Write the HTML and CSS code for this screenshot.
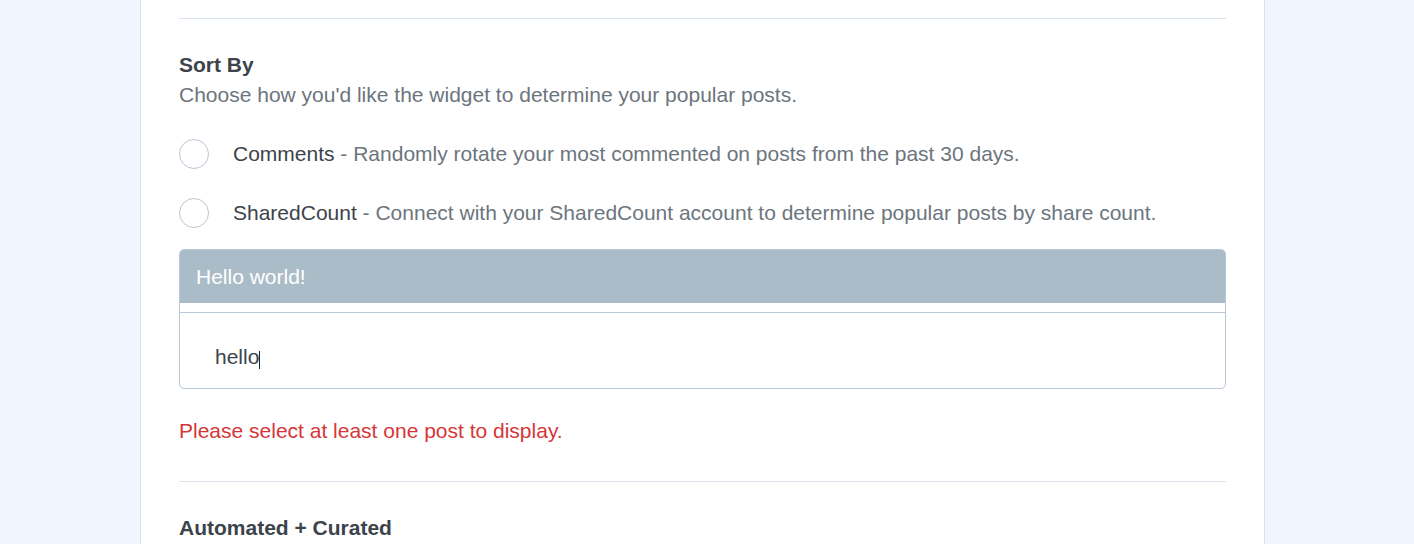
FILE: index.html
```html
<!DOCTYPE html>
<html>
<head>
<meta charset="utf-8">
<link rel="stylesheet" href="styles.css">
</head>
<body>
<div class="panel">
  <hr class="sep sep-top">
  <section class="field">
    <h3 class="field-title">Sort By</h3>
    <p class="field-desc">Choose how you'd like the widget to determine your popular posts.</p>
    <label class="radio-row">
      <span class="radio"></span>
      <span class="radio-text"><span class="radio-name">Comments</span> - Randomly rotate your most commented on posts from the past 30 days.</span>
    </label>
    <label class="radio-row">
      <span class="radio"></span>
      <span class="radio-text"><span class="radio-name">SharedCount</span> - Connect with your SharedCount account to determine popular posts by share count.</span>
    </label>
    <div class="card">
      <div class="card-head">Hello world!</div>
      <div class="card-body"><span class="typed">hello</span><span class="caret"></span></div>
    </div>
    <p class="error">Please select at least one post to display.</p>
  </section>
  <hr class="sep">
  <section class="field">
    <h3 class="field-title">Automated + Curated</h3>
  </section>
</div>
</body>
</html>
```
FILE: styles.css
```css
html, body {
  margin: 0;
  padding: 0;
}
body {
  background: #f0f5fe;
  font-family: "Liberation Sans", Arial, sans-serif;
  font-size: 21px;
  line-height: 30px;
  color: #3c434a;
  height: 544px;
  overflow: hidden;
}
.panel {
  margin-left: 140px;
  width: 1047px;
  padding: 0 38px;
  background: #ffffff;
  border-left: 1px solid #d5e3f0;
  border-right: 1px solid #d5e3f0;
  min-height: 600px;
}
.sep {
  border: 0;
  border-top: 1px solid #dce5ee;
  margin: 0;
  height: 0;
}
.sep-top {
  padding-top: 18px;
  border-top: 0;
  border-bottom: 1px solid #d8e4ef;
}
.field {
  padding-top: 31px;
  padding-bottom: 35px;
}
.field-title {
  margin: 0;
  font-size: 21px;
  line-height: 30px;
  font-weight: bold;
  color: #3c434a;
}
.field-desc {
  margin: 0;
  color: #6c757d;
}
.radio-row {
  display: flex;
  align-items: center;
  margin-top: 29px;
  height: 30px;
}
.radio {
  box-sizing: border-box;
  width: 30px;
  height: 30px;
  border: 1px solid #b8c6d3;
  border-radius: 50%;
  flex: none;
  margin-right: 24px;
  background: #fff;
}
.radio-text {
  color: #6c757d;
}
.radio-name {
  color: #3c434a;
}
.card {
  margin-top: 21px;
  border: 1px solid #b9c8d6;
  border-radius: 5px;
  overflow: hidden;
}
.card-head {
  background: #abbcc9;
  color: #ffffff;
  height: 53px;
  line-height: 53px;
  padding-left: 16px;
  margin-bottom: 9px;
}
.card-body {
  border-top: 1px solid #b9c8d6;
  padding: 29px 35px 16px;
  display: flex;
  align-items: center;
  height: 30px;
}
.typed {
  color: #3c434a;
}
.caret {
  display: inline-block;
  width: 1px;
  height: 18px;
  background: #1d2327;
  margin-top: 5px;
}
.error {
  margin: 27px 0 0;
  color: #d63638;
}
```
